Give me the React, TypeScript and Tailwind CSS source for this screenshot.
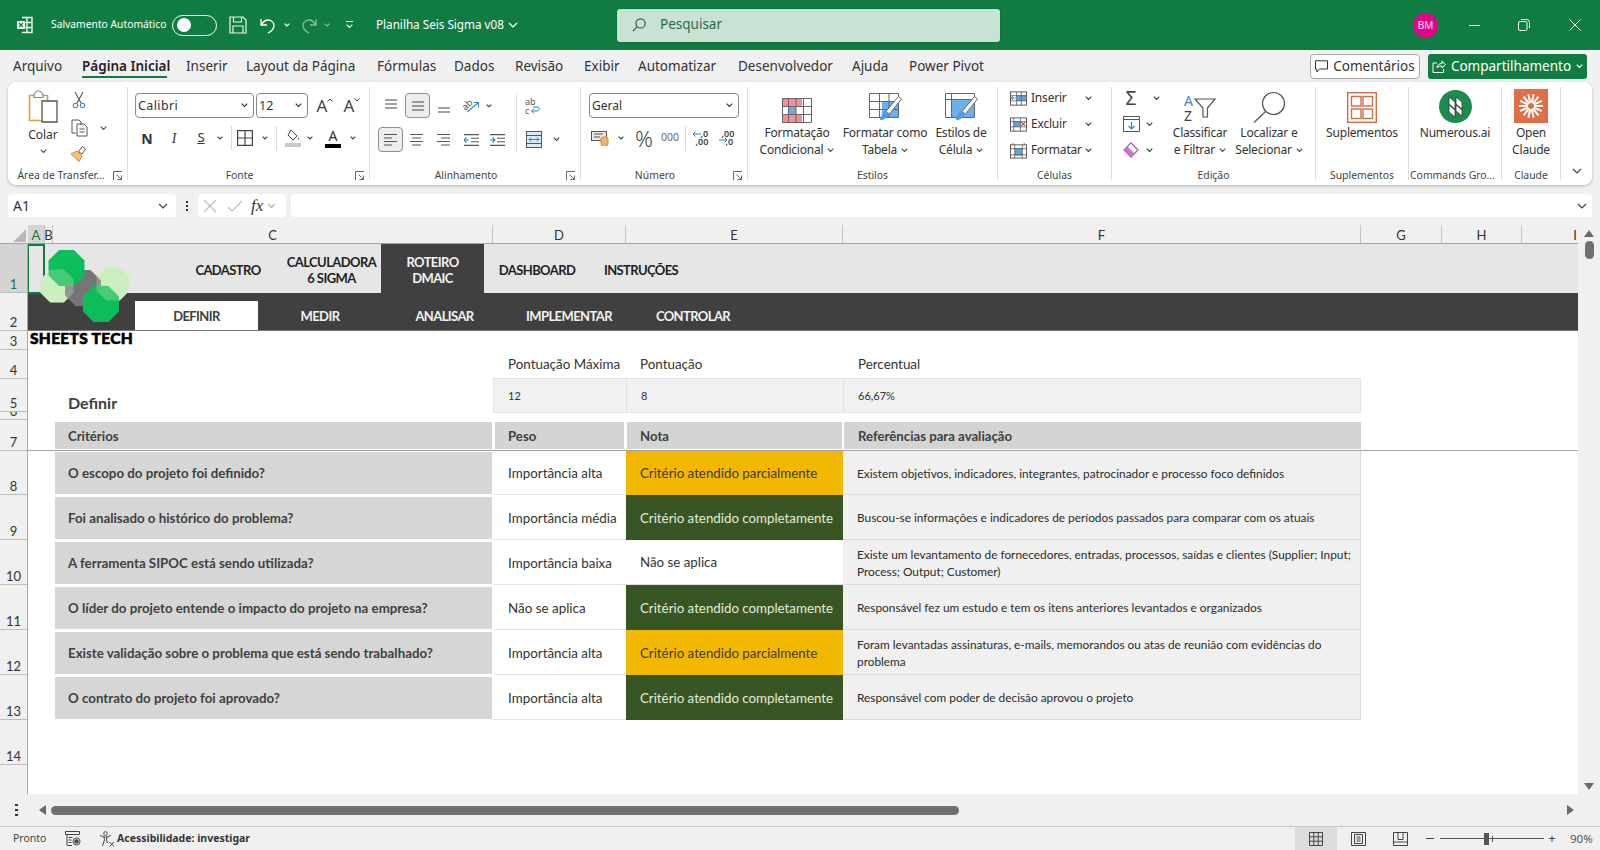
import React from "react";

const UI = "font-['Noto_Sans','Open_Sans',sans-serif]";
const CAL = "font-['Lato','Noto_Sans',sans-serif]";
const GRID = "grid grid-cols-[17px_8px_440px_133px_217px_518px]";

function Chev({ c = "#444", w = 8, sw = 1.2 }: { c?: string; w?: number; sw?: number }) {
  return (
    <svg width={w} height={w * 0.6} viewBox="0 0 10 6" fill="none" stroke={c} strokeWidth={sw * 10 / w}>
      <path d="M1 1l4 4 4-4" />
    </svg>
  );
}
function S({ c = "w-[24px]", children }: { c?: string; children?: React.ReactNode }) {
  return <div className={"flex shrink-0 items-center justify-center " + c}>{children}</div>;
}
function Launcher() {
  return (
    <svg width="10" height="10" viewBox="0 0 10 10" fill="none" stroke="#666" strokeWidth="1" className="shrink-0">
      <path d="M.5 9V.5H9M3.5 3.5l5 5M8.5 4.5v4h-4" />
    </svg>
  );
}
function Sep() {
  return <div className="my-[5px] w-px shrink-0 self-stretch bg-[#dedede]" />;
}
function Group({ w, label, launch, children, lc = "" }: { w: string; label: string; launch?: boolean; children: React.ReactNode; lc?: string }) {
  return (
    <div className={"flex shrink-0 flex-col " + w}>
      <div className="h-[83px]">{children}</div>
      <div className="flex h-[20px] items-center pt-[1px] text-[10.4px] leading-none text-[#444]">
        <div className={"flex-1 whitespace-nowrap text-center " + lc}>{label}</div>
        {launch && <div className="flex w-[18px] shrink-0 justify-center"><Launcher /></div>}
      </div>
    </div>
  );
}
function Big({ w, icon, lines, ch, ml = "" }: { w: string; icon: React.ReactNode; lines: string[]; ch?: boolean; ml?: string }) {
  return (
    <div className={"flex shrink-0 flex-col items-center " + w + " " + ml}>
      <div className="flex h-[43px] items-end justify-center pb-[2px]">{icon}</div>
      <div className="text-center text-[12px] leading-[16.5px] tracking-[-0.2px] whitespace-nowrap text-[#333]">
        {lines.map((l, i) => (
          <div key={l} className="flex items-center justify-center gap-[4px]">
            {l}
            {ch && i === lines.length - 1 && <Chev w={7} c="#555" />}
          </div>
        ))}
      </div>
    </div>
  );
}

function Oct({ cx, cy, h, fill, op = 1 }: { cx: number; cy: number; h: number; fill: string; op?: number }) {
  const t = h * 0.414;
  const p = [[-t, -h], [t, -h], [h, -t], [h, t], [t, h], [-t, h], [-h, t], [-h, -t]].map(([x, y]) => `${cx + x},${cy + y}`).join(" ");
  return <polygon points={p} fill={fill} opacity={op} />;
}
function Logo() {
  return (
    <svg width="100" height="85" viewBox="38 246 100 85" className="block">
      <Oct cx={57} cy={286} h={16.5} fill="#ccefc0" />
      <Oct cx={113} cy={284} h={16.5} fill="#ccefc0" />
      <Oct cx={83} cy={288} h={18} fill="#767676" />
      <Oct cx={66.5} cy={268} h={18} fill="#0cbd5b" />
      <Oct cx={101} cy={304} h={18} fill="#0cbd5b" />
      <Oct cx={57} cy={286} h={16.5} fill="#ccefc0" op={0.3} />
      <Oct cx={113} cy={284} h={16.5} fill="#ccefc0" op={0.3} />
    </svg>
  );
}

/* ---- small office icons ---- */
const I = {
  Excel: () => (
    <svg width="18" height="20" viewBox="0 0 18 20" fill="none" stroke="#fff" strokeWidth="1.3">
      <path d="M6 2.5h10v15H6M11 2.5v15M6 7.5h10M6 12.5h10" />
      <rect x="1" y="6" width="8" height="8" fill="#fff" stroke="none" rx=".7" />
      <path d="M3 8l4 4M7 8l-4 4" stroke="#107c41" strokeWidth="1.2" />
    </svg>
  ),
  Save: () => (
    <svg width="18" height="18" viewBox="0 0 18 18" fill="none" stroke="#fff" strokeWidth="1.2" opacity=".92">
      <path d="M1 1h13l3 3v13H1zM4.5 1v5h8V1M4 17v-7h10v7" />
    </svg>
  ),
  Undo: ({ c = "#fff" }: { c?: string }) => (
    <svg width="18" height="17" viewBox="0 0 18 17" fill="none" stroke={c} strokeWidth="1.3">
      <path d="M2 2v6h6M2 8c2-3 4-5 7-5 3.5 0 6 2.5 6 5.5 0 3-2 5.5-6 7.5" />
    </svg>
  ),
  Redo: ({ c = "#fff" }: { c?: string }) => (
    <svg width="18" height="17" viewBox="0 0 18 17" fill="none" stroke={c} strokeWidth="1.3">
      <path d="M16 2v6h-6M16 8c-2-3-4-5-7-5-3.5 0-6 2.5-6 5.5 0 3 2 5.5 6 7.5" />
    </svg>
  ),
  Search: ({ s = 14, c = "#245f3f", w = 1.2 }: { s?: number; c?: string; w?: number }) => (
    <svg width={s} height={s} viewBox="0 0 14 14" fill="none" stroke={c} strokeWidth={w}>
      <circle cx="8.6" cy="5.4" r="4.6" />
      <path d="M5.2 8.6L.8 13.2" />
    </svg>
  ),
  Paste: () => (
    <svg width="30" height="33" viewBox="0 0 30 33">
      <path d="M1.5 5.5h18v25h-18z" fill="#fff" stroke="#e59b3f" strokeWidth="1.6" />
      <path d="M6 5.5c1-4 3-4.5 4.5-4.5s3.5.5 4.5 4.5v2H6z" fill="#fff" stroke="#888" strokeWidth="1.1" />
      <path d="M14 11h15v21H14z" fill="#fff" stroke="#555" strokeWidth="1.3" />
    </svg>
  ),
  Cut: () => (
    <svg width="14" height="18" viewBox="0 0 14 18" fill="none" strokeWidth="1.1">
      <path d="M3 1l6 11M11 1L5 12" stroke="#555" />
      <circle cx="3.5" cy="14.5" r="2.2" stroke="#3f86c7" />
      <circle cx="10.5" cy="14.5" r="2.2" stroke="#3f86c7" />
    </svg>
  ),
  Copy: () => (
    <svg width="17" height="18" viewBox="0 0 17 18" fill="none" stroke="#555" strokeWidth="1">
      <path d="M5 14H1V1h7l2 2v3" />
      <path d="M6 5h7l3 3v9H6zM8.5 10h5M8.5 13h5" />
    </svg>
  ),
  Brush: () => (
    <svg width="20" height="20" viewBox="0 0 18 18">
      <path d="M1 10l6-3 5 5-3 5.5z" fill="#f4c27a" stroke="#d98a2b" strokeWidth="1" />
      <path d="M8.5 7.5l4-5 3 2.500-3.5 5z" fill="#fff" stroke="#555" strokeWidth="1" />
    </svg>
  ),
  Grow: ({ d }: { d: "up" | "down" }) => (
    <div className="flex items-start text-[#444]">
      <span className="text-[17px] leading-none">A</span>
      <svg width="6" height="4" viewBox="0 0 6 4" fill="none" stroke="#444" strokeWidth="1" className="mt-[1px]">
        <path d={d === "up" ? "M.5 3.5L3 1l2.5 2.5" : "M.5 .5L3 3l2.5-2.5"} />
      </svg>
    </div>
  ),
  Borders: () => (
    <svg width="16" height="16" viewBox="0 0 16 16" fill="none" stroke="#444" strokeWidth="1.2">
      <path d="M.6 .6h14.8v14.8H.6zM8 .6v14.8M.6 8h14.8" />
    </svg>
  ),
  Fill: () => (
    <svg width="17" height="19" viewBox="0 0 17 19">
      <path d="M7 1l6 6-4 4-5-5z" fill="#fff" stroke="#444" strokeWidth="1" />
      <path d="M14 8c1 1.5 1.5 2.5 1 3-1 .5-1.5-1-1-3z" fill="#3a83c7" />
      <path d="M1 14h16v4H1z" fill="#c9c9c9" />
    </svg>
  ),
  ColorA: () => (
    <div className="flex flex-col items-center">
      <span className="text-[14px] leading-[14px] text-[#333]">A</span>
      <div className="mt-[1px] h-[4px] w-[16px] bg-black" />
    </div>
  ),
  Lines: ({ widths, y }: { widths: number[]; y: number }) => (
    <svg width="16" height="14" viewBox="0 0 16 14" fill="none" stroke="#555" strokeWidth="1.1">
      {widths.map((w, i) => (
        <path key={i} d={`M${(16 - w) / 2} ${y + i * 4}h${w}`} />
      ))}
    </svg>
  ),
  Orient: () => (
    <svg width="20" height="18" viewBox="0 0 20 18" fill="none">
      <text x="1" y="10" fontSize="9.5" fill="#555" transform="rotate(-45 7 9)" fontFamily="Noto Sans">ab</text>
      <path d="M5 15L16 6M11.5 5.5h5v5" stroke="#3a88c9" strokeWidth="1.1" />
    </svg>
  ),
  Indent: ({ rev }: { rev?: boolean }) => (
    <svg width="15" height="12" viewBox="0 0 15 12" fill="none" strokeWidth="1.1">
      <path d="M0 .6h15M7 4.3h8M7 7.7h8M0 11.4h15" stroke="#555" />
      <path d={rev ? "M5 6H0M2.4 3.5L0 6l2.4 2.5" : "M0 6h5M2.6 3.5L5 6 2.6 8.5"} stroke="#2f83c4" />
    </svg>
  ),
  Wrap: () => (
    <svg width="16" height="18" viewBox="0 0 16 18" fill="none">
      <text x="0" y="8" fontSize="9" fill="#555" fontFamily="Noto Sans">ab</text>
      <text x="0" y="17" fontSize="9" fill="#555" fontFamily="Noto Sans">c</text>
      <path d="M7 14h5c3 0 3-4 0-4H8M9 11.5L6.5 14 9 16.5" stroke="#2f83c4" strokeWidth="1" />
    </svg>
  ),
  Merge: () => (
    <svg width="16" height="17" viewBox="0 0 16 17" fill="none" strokeWidth="1">
      <rect x=".5" y=".5" width="15" height="16" fill="#d9ebf7" stroke="#555" />
      <path d="M.5 4.5h15M.5 12.5h15" stroke="#555" />
      <path d="M3 8.5h10M5 6.5l-2 2 2 2M11 6.5l2 2-2 2" stroke="#2f83c4" />
    </svg>
  ),
  Currency: () => (
    <svg width="18" height="15" viewBox="0 0 18 15">
      <rect x=".5" y=".5" width="15" height="9" fill="#e9e9e9" stroke="#555" />
      <path d="M3 3h9M3 6h6" stroke="#555" strokeWidth="1.2" />
      <rect x="10" y="6" width="7" height="9" rx="2" fill="#f0b46a" stroke="#d98a2b" />
    </svg>
  ),
  Dec: ({ rev }: { rev?: boolean }) =>
    rev ? (
      <div className="relative h-[17px] w-[17px] text-[9px] font-semibold leading-[8.5px] text-[#444]">
        <div className="pl-[3px]">,00</div>
        <div className="pl-[7px]">,0</div>
        <svg width="9" height="6" viewBox="0 0 9 6" fill="none" stroke="#2f83c4" className="absolute left-0 top-[7px]"><path d="M0 3h8M5.5.5L8 3 5.5 5.5" /></svg>
      </div>
    ) : (
      <div className="relative h-[17px] w-[17px] text-[9px] font-semibold leading-[8.5px] text-[#444]">
        <div className="pl-[9px]">,0</div>
        <div className="pl-[4px]">,00</div>
        <svg width="9" height="6" viewBox="0 0 9 6" fill="none" stroke="#2f83c4" className="absolute left-0 top-[1px]"><path d="M9 3H1M3.5.5L1 3l2.5 2.5" /></svg>
      </div>
    ),
  Cond: () => (
    <svg width="30" height="25" viewBox="0 0 30 25">
      <rect width="30" height="25" fill="#fff" />
      <rect x="0" y="0" width="20" height="8" fill="#f58d98" />
      <rect x="0" y="17" width="20" height="8" fill="#f58d98" />
      <rect x="6" y="8" width="8" height="9" fill="#6ea8e6" />
      <path d="M.5 .5h29v24H.5zM.5 8.5h29M.5 16.5h29M6.5 .5v24M14 .5v24M21.5 .5v24" fill="none" stroke="#666" strokeWidth="1" />
    </svg>
  ),
  Table: () => (
    <svg width="33" height="30" viewBox="0 0 33 30">
      <rect x="13" y="8" width="17" height="16" fill="#6ab0ec" />
      <path d="M.5 .5h29v24H.5zM.5 8.5h29M.5 16.5h29M10.5 .5v24M20 .5v24" fill="none" stroke="#666" strokeWidth="1" />
      <path d="M32.5 6L20.5 21l-3.500-2.500L29.500 3.500z" fill="#fff" stroke="#666" strokeWidth="1" />
      <path d="M17 18c-3 0-4 4-6 8-1 2 4 1 6-1 3-2 3-4 3-5z" fill="#4c9ee0" />
    </svg>
  ),
  Style: () => (
    <svg width="33" height="30" viewBox="0 0 33 30">
      <rect x="6" y="6" width="24" height="18" fill="#6ab0ec" />
      <path d="M.5 .5h29v24H.5zM.5 6.5h29M6.5 .5v24" fill="none" stroke="#666" strokeWidth="1" />
      <path d="M32.5 6L20.5 21l-3.500-2.500L29.500 3.500z" fill="#fff" stroke="#666" strokeWidth="1" />
      <path d="M17 18c-3 0-4 4-6 8-1 2 4 1 6-1 3-2 3-4 3-5z" fill="#4c9ee0" />
    </svg>
  ),
  Ins: () => (
    <svg width="18" height="15" viewBox="0 0 18 15">
      <rect x=".5" y=".5" width="17" height="14" fill="#fff" stroke="#555" />
      <rect x="7" y="4" width="10" height="6" fill="#5aa5e4" />
      <path d="M.5 4.5h17M.5 10h17M7 .5v14M12 .5v14" stroke="#555" strokeWidth=".8" fill="none" />
      <path d="M6 7H1M3 5L1 7l2 2" stroke="#2f83c4" fill="none" />
    </svg>
  ),
  Del: () => (
    <svg width="18" height="15" viewBox="0 0 18 15">
      <rect x=".5" y=".5" width="17" height="14" fill="#fff" stroke="#555" />
      <rect x="4" y="4" width="7" height="6" fill="#5aa5e4" />
      <path d="M.5 4.5h17M.5 10h17M4 .5v14M11 .5v14" stroke="#555" strokeWidth=".8" fill="none" />
      <path d="M12 5l4 4M16 5l-4 4" stroke="#d8354a" strokeWidth="1.2" fill="none" />
    </svg>
  ),
  Fmt: () => (
    <svg width="18" height="17" viewBox="0 0 18 17">
      <rect x=".5" y="2.5" width="17" height="14" fill="#fff" stroke="#555" />
      <rect x="5" y="6" width="8" height="8" fill="#5aa5e4" />
      <path d="M.5 6.5h17M.5 13h17M5 2.5v14M13 2.5v14M3 .5v2M15 .5v2" stroke="#555" strokeWidth=".8" fill="none" />
    </svg>
  ),
  FillD: () => (
    <svg width="17" height="16" viewBox="0 0 17 16" fill="none">
      <path d="M.5 .5h16v15H.5zM.5 3.5h16" stroke="#555" />
      <path d="M8.5 6v7M5.5 10l3 3 3-3" stroke="#2f83c4" strokeWidth="1.2" />
    </svg>
  ),
  Erase: () => (
    <svg width="16" height="16" viewBox="0 0 16 16">
      <path d="M8 .8L15 8l-7 7.2L1 8z" fill="#fff" stroke="#a84db5" strokeWidth="1.2" />
      <path d="M1 8l3.5-3.5 7 7L8 15.2z" fill="#c774cf" />
    </svg>
  ),
  Sort: () => (
    <svg width="32" height="30" viewBox="0 0 32 30" fill="none">
      <text x="0" y="13" fontSize="14" fill="#3f86c7" fontFamily="Noto Sans">A</text>
      <text x="0" y="28" fontSize="14" fill="#444" fontFamily="Noto Sans">Z</text>
      <path d="M11 6h20l-7.5 9v9h-4.5v-9z" stroke="#555" strokeWidth="1.2" />
    </svg>
  ),
  Find: () => (
    <svg width="33" height="32" viewBox="0 0 33 32" fill="none" stroke="#555" strokeWidth="1.2">
      <circle cx="20.5" cy="12.5" r="11" fill="#fff" />
      <path d="M12.5 20.5L1 31.5" />
    </svg>
  ),
  Addins: () => (
    <svg width="30" height="31" viewBox="0 0 30 31" fill="#fff" stroke="#cb6f48" strokeWidth="1.4">
      <rect x=".7" y=".7" width="28.6" height="29.6" />
      <rect x="4.5" y="4.5" width="9.5" height="9.5" />
      <rect x="16" y="4.5" width="9.5" height="9.5" />
      <rect x="4.5" y="17" width="9.5" height="9.5" />
      <rect x="16" y="17" width="9.5" height="9.5" />
    </svg>
  ),
  Numerous: () => (
    <svg width="33" height="33" viewBox="0 0 33 33">
      <circle cx="16.5" cy="16.5" r="16.5" fill="#1f8a4e" />
      <path d="M10 7l6 5v7l-6-5zM17 7l6 5v7l-6-5zM10 15l6 5v7l-6-5zM17 15l6 5v6l-6-5z" fill="#fff" stroke="#333" strokeWidth=".8" />
    </svg>
  ),
  Claude: () => (
    <svg width="34" height="34" viewBox="0 0 34 34">
      <rect width="34" height="34" fill="#df6f47" />
      {Array.from({ length: 14 }).map((_, i) => {
        const a = (i * Math.PI * 2) / 14;
        return <line key={i} x1={17 + Math.cos(a) * 3} y1={17 + Math.sin(a) * 3} x2={17 + Math.cos(a) * 12} y2={17 + Math.sin(a) * 12} stroke="#fff" strokeWidth="2" />;
      })}
    </svg>
  ),
  Comment: () => (
    <svg width="13" height="13" viewBox="0 0 13 13" fill="none" stroke="#333" strokeWidth="1">
      <path d="M.5 .8h12v8.2H4.5L1.8 12V9H.5z" />
    </svg>
  ),
  Share: () => (
    <svg width="14" height="13" viewBox="0 0 14 13" fill="none" stroke="#fff" strokeWidth="1">
      <path d="M5 3H1v9.5h10.5V9M5 8c0-3 2-4.5 5-4.5V1l3.5 3.8L10 8V6c-2 0-4 0-5 2z" />
    </svg>
  ),
  Restore: () => (
    <svg width="12" height="12" viewBox="0 0 12 12" fill="none" stroke="#fff" strokeWidth="1">
      <rect x=".5" y="2.5" width="8.5" height="9" rx="1.5" />
      <path d="M3 .5h5.5A3 3 0 0 1 11.5 3.5V9" />
    </svg>
  ),
  Access: () => (
    <svg width="16" height="16" viewBox="0 0 16 16" fill="none" stroke="#444" strokeWidth="1">
      <circle cx="6.5" cy="2.5" r="1.8" />
      <path d="M1 4.5l4 1.5h3l4-1.5M5 6l.5 3L3.5 15M8 6L7.5 9l1 3M10.5 11l4.5 4.5M15 11l-4.5 4.5" />
    </svg>
  ),
  Macro: () => (
    <svg width="16" height="15" viewBox="0 0 16 15" fill="none" stroke="#444" strokeWidth="1">
      <path d="M.5 .5h14v3H.5zM2 3.5v11h5M3.5 6.5h4M3.5 9h3M3.5 11.5h3" />
      <circle cx="11.5" cy="10.5" r="3.5" />
      <circle cx="11.5" cy="10.5" r="1.8" fill="#444" />
    </svg>
  ),
  Normal: () => (
    <svg width="14" height="14" viewBox="0 0 14 14" fill="none" stroke="#444" strokeWidth="1">
      <path d="M.5 .5h13v13H.5zM.5 4.8h13M.5 9.2h13M4.8 .5v13M9.2 .5v13" />
    </svg>
  ),
  PageL: () => (
    <svg width="15" height="14" viewBox="0 0 15 14" fill="none" stroke="#444" strokeWidth="1">
      <path d="M.5 .5h14v13H.5zM3.5 2.5h8v9h-8zM5.5 5h4M5.5 7h4M5.5 9h4" />
    </svg>
  ),
  Break: () => (
    <svg width="15" height="14" viewBox="0 0 15 14" fill="none" stroke="#444" strokeWidth="1">
      <path d="M.5 .5h14v13H.5zM5 .5v7h5v-7M.5 10h14" />
    </svg>
  ),
};

const tabs: [string, string][] = [
  ["Arquivo", "w-[69px]"],
  ["Página Inicial", "w-[104px]"],
  ["Inserir", "w-[60px]"],
  ["Layout da Página", "w-[131px]"],
  ["Fórmulas", "w-[77px]"],
  ["Dados", "w-[61px]"],
  ["Revisão", "w-[69px]"],
  ["Exibir", "w-[54px]"],
  ["Automatizar", "w-[100px]"],
  ["Desenvolvedor", "w-[114px]"],
  ["Ajuda", "w-[57px]"],
  ["Power Pivot", "w-[80px]"],
];

function TitleBar() {
  return (
    <div className="flex h-[50px] shrink-0 items-center bg-[#107c41] text-white">
      <div className="ml-[16px] flex w-[18px] justify-center"><I.Excel /></div>
      <div className="ml-[17px] w-[121px] whitespace-nowrap text-[10.3px]">Salvamento Automático</div>
      <div className="flex h-[21px] w-[45px] items-center rounded-full border border-white pl-[4px]">
        <div className="h-[14px] w-[14px] rounded-full bg-white" />
      </div>
      <div className="ml-[12px] flex w-[18px]"><I.Save /></div>
      <div className="ml-[12px] flex w-[18px]"><I.Undo /></div>
      <div className="ml-[5px] flex w-[10px] justify-center"><Chev c="#fff" w={6} /></div>
      <div className="ml-[8px] flex w-[18px] opacity-50"><I.Redo /></div>
      <div className="ml-[4px] flex w-[10px] justify-center opacity-50"><Chev c="#fff" w={6} /></div>
      <div className="ml-[12px] flex w-[10px] flex-col items-center gap-[2px]">
        <div className="h-px w-[7px] bg-white" />
        <Chev c="#fff" w={7} />
      </div>
      <div className="ml-[22px] w-[129px] whitespace-nowrap text-[11.7px]">Planilha Seis Sigma v08</div>
      <div className="ml-[3px] flex w-[10px]"><Chev c="#fff" w={10} /></div>
      <div className="ml-[99px] flex h-[33px] w-[383px] items-center rounded-[3px] bg-[#c8e2d3] pb-[1px] text-[13.5px] text-[#2b6b49] shadow-[0_0_2px_rgba(0,0,0,.3)]">
        <div className="ml-[15px] flex w-[14px]"><I.Search /></div>
        <div className="ml-[14px]">Pesquisar</div>
      </div>
      <div className="ml-[413px] flex h-[25px] w-[25px] items-center justify-center rounded-full bg-[#e3008c] text-[10px] text-white/90">BM</div>
      <div className="ml-[31px] h-px w-[11px] bg-white" />
      <div className="ml-[38px] flex w-[12px]"><I.Restore /></div>
      <div className="ml-[39px] flex w-[12px]">
        <svg width="12" height="12" viewBox="0 0 12 12" stroke="#fff" strokeWidth="1"><path d="M.5 .5l11 11M11.5 .5l-11 11" /></svg>
      </div>
    </div>
  );
}

function TabRow() {
  return (
    <div className="flex h-[32px] shrink-0 items-center pl-[13px] text-[13.5px] text-[#333]">
      {tabs.map(([t, w]) =>
        t === "Página Inicial" ? (
          <div key={t} className={"relative shrink-0 " + w}>
            <div className="inline-block whitespace-nowrap font-semibold text-[#222]">{t}</div>
            <div className="absolute left-0 top-[20px] h-[2px] w-[85px] bg-[#107c41]" />
          </div>
        ) : (
          <div key={t} className={"shrink-0 whitespace-nowrap " + w}>{t}</div>
        )
      )}
      <div className="ml-[321px] flex h-[25px] w-[110px] items-center justify-center gap-[5px] rounded-[4px] border border-[#a8a8a8] bg-white text-[13.5px]">
        <I.Comment />
        Comentários
      </div>
      <div className="ml-[8px] flex h-[25px] w-[159px] items-center justify-center gap-[5px] rounded-[3px] bg-[#107c41] text-[13.5px] text-white">
        <I.Share />
        Compartilhamento
        <Chev c="#fff" w={7} />
      </div>
    </div>
  );
}

function Select({ w, label, lc = "" }: { w: string; label: string; lc?: string }) {
  return (
    <div className={"flex h-[25px] shrink-0 items-center justify-between rounded-[4px] border border-[#8a8a8a] bg-white pl-[2px] pr-[5px] text-[12px] text-[#333] " + w}>
      <span className={"pt-[1px] " + lc}>{label}</span>
      <Chev w={7} c="#333" />
    </div>
  );
}

function Ribbon() {
  return (
    <div className="mx-[8px] flex h-[103px] shrink-0 rounded-[8px] bg-white shadow-[0_1px_3px_rgba(0,0,0,.25)]">
      {/* clipboard */}
      <Group w="w-[119px]" label="Área de Transfer..." launch lc="pl-[5px]">
        <div className="flex pt-[8px]">
          <div className="ml-[19px] flex w-[32px] flex-col items-center">
            <I.Paste />
            <div className="mt-[3px] text-[12px] leading-[17px] text-[#333]">Colar</div>
            <div className="mt-[6px]"><Chev w={7} c="#555" /></div>
          </div>
          <div className="ml-[11px] flex w-[44px] flex-col">
            <S c="h-[20px] w-[18px]"><I.Cut /></S>
            <div className="mt-[6px] flex h-[24px] items-center">
              <S c="w-[18px]"><I.Copy /></S>
              <S c="ml-[9px] w-[12px]"><Chev w={7} c="#555" /></S>
            </div>
            <S c="mt-[2px] h-[22px] w-[18px]"><I.Brush /></S>
          </div>
        </div>
      </Group>
      <Sep />
      {/* font */}
      <Group w="w-[241px]" label="Fonte" launch>
        <div className="flex items-center pl-[7px] pt-[11px]">
          <Select w="w-[119px]" label="Calibri" lc="text-[12.5px] tracking-[.4px]" />
          <Select w="ml-[2px] w-[52px]" label="12" lc="text-[12.5px]" />
          <S c="ml-[7px] w-[20px]"><I.Grow d="up" /></S>
          <S c="ml-[7px] w-[20px]"><I.Grow d="down" /></S>
        </div>
        <div className="mt-[8px] flex h-[24px] items-center pl-[7px] text-[#333]">
          <S c="w-[24px] text-[14px] font-bold">N</S>
          <S c="ml-[3px] w-[24px] font-['Liberation_Serif',serif] text-[14px] italic">I</S>
          <S c="ml-[3px] w-[24px] text-[13px] underline">S</S>
          <S c="w-[14px]"><Chev w={6} /></S>
          <div className="ml-[4px] h-[24px] w-px bg-[#dcdcdc]" />
          <S c="ml-[1px] w-[24px]"><I.Borders /></S>
          <S c="w-[16px]"><Chev w={6} /></S>
          <div className="ml-[3px] h-[24px] w-px bg-[#dcdcdc]" />
          <S c="w-[30px]"><I.Fill /></S>
          <S c="w-[6px]"><Chev w={6} /></S>
          <S c="ml-[8px] w-[24px]"><I.ColorA /></S>
          <S c="w-[16px]"><Chev w={6} /></S>
        </div>
      </Group>
      <Sep />
      {/* alignment */}
      <Group w="w-[210px]" label="Alinhamento" launch>
        <div className="flex h-[70px] pt-[11px]">
          <div className="flex w-[146px] flex-col">
            <div className="flex h-[25px] items-center">
              <S c="ml-[10px] w-[22px]"><I.Lines widths={[12, 12, 12]} y={1} /></S>
              <S c="ml-[3px] h-[25px] w-[25px] rounded-[4px] border border-[#8f8f8f] bg-[#ededed]"><I.Lines widths={[12, 12, 12]} y={3} /></S>
              <S c="ml-[2px] w-[24px]"><I.Lines widths={[12, 12]} y={9} /></S>
              <S c="ml-[4px] w-[24px]"><I.Orient /></S>
              <S c="w-[10px]"><Chev w={6} /></S>
            </div>
            <div className="mt-[9px] flex h-[25px] items-center">
              <S c="ml-[8px] h-[25px] w-[25px] rounded-[4px] border border-[#8f8f8f] bg-[#ededed]">
                <svg width="15" height="13" viewBox="0 0 15 13" stroke="#555" strokeWidth="1.1"><path d="M1 1.5h13M1 5h8M1 8.5h13M1 12h8" /></svg>
              </S>
              <S c="ml-[1px] w-[24px]">
                <svg width="15" height="13" viewBox="0 0 15 13" stroke="#555" strokeWidth="1.1"><path d="M1 1.5h13M3 5h9M1 8.5h13M3 12h9" /></svg>
              </S>
              <S c="ml-[3px] w-[24px]">
                <svg width="15" height="13" viewBox="0 0 15 13" stroke="#555" strokeWidth="1.1"><path d="M1 1.5h13M5 5h9M1 8.5h13M5 12h9" /></svg>
              </S>
              <S c="ml-[4px] w-[24px]"><I.Indent rev /></S>
              <S c="ml-[2px] w-[24px]"><I.Indent /></S>
            </div>
          </div>
          <div className="h-[59px] w-px bg-[#dedede]" />
          <div className="flex flex-col">
            <S c="ml-[6px] h-[25px] w-[20px]"><I.Wrap /></S>
            <div className="mt-[9px] flex h-[25px] items-center">
              <S c="ml-[7px] w-[20px]"><I.Merge /></S>
              <S c="ml-[4px] w-[16px]"><Chev w={7} /></S>
            </div>
          </div>
        </div>
      </Group>
      <Sep />
      {/* number */}
      <Group w="w-[166px]" label="Número" launch>
        <div className="pl-[8px] pt-[11px]"><Select w="w-[150px]" label="Geral" /></div>
        <div className="mt-[7px] flex h-[26px] items-center pl-[7px] text-[#444]">
          <S c="w-[24px]"><I.Currency /></S>
          <S c="w-[18px]"><Chev w={6} /></S>
          <S c="w-[28px] text-[22px] leading-none font-light">%</S>
          <S c="w-[24px] text-[10.5px] text-[#666]">000</S>
          <div className="ml-[3px] h-[25px] w-px bg-[#dcdcdc]" />
          <S c="w-[28px]"><I.Dec /></S>
          <S c="w-[26px]"><I.Dec rev /></S>
        </div>
      </Group>
      <Sep />
      {/* styles */}
      <Group w="w-[249px]" label="Estilos">
        <div className="flex">
          <Big w="w-[90px]" ml="ml-[4px]" icon={<I.Cond />} lines={["Formatação", "Condicional"]} ch />
          <Big w="w-[72px]" ml="ml-[7px]" icon={<I.Table />} lines={["Formatar como", "Tabela"]} ch />
          <Big w="w-[72px]" ml="ml-[4px]" icon={<I.Style />} lines={["Estilos de", "Célula"]} ch />
        </div>
      </Group>
      <Sep />
      {/* cells */}
      <Group w="w-[113px]" label="Células">
        <div className="pl-[12px] pt-[3px] text-[12px] tracking-[-0.2px] text-[#333]">
          {([["Inserir", <I.Ins key="a" />], ["Excluir", <I.Del key="b" />], ["Formatar", <I.Fmt key="c" />]] as [string, React.ReactNode][]).map(([t, ic]) => (
            <div key={t} className="flex h-[26px] items-center">
              <S c="w-[17px]">{ic}</S>
              <div className="ml-[4px] w-[52px] whitespace-nowrap">{t}</div>
              <S c="w-[10px]"><Chev w={7} /></S>
            </div>
          ))}
        </div>
      </Group>
      <Sep />
      {/* edit */}
      <Group w="w-[203px]" label="Edição">
        <div className="flex">
          <div className="ml-[9px] flex w-[44px] flex-col pt-[3px]">
            <div className="flex h-[26px] items-center">
              <S c="w-[20px] text-[19px] leading-none text-[#444]">Σ</S>
              <S c="ml-[10px] w-[10px]"><Chev w={7} /></S>
            </div>
            <div className="flex h-[26px] items-center">
              <S c="w-[20px]"><I.FillD /></S>
              <S c="ml-[3px] w-[10px]"><Chev w={7} /></S>
            </div>
            <div className="flex h-[26px] items-center">
              <S c="w-[20px]"><I.Erase /></S>
              <S c="ml-[3px] w-[10px]"><Chev w={7} /></S>
            </div>
          </div>
          <Big w="w-[70px]" icon={<I.Sort />} lines={["Classificar", "e Filtrar"]} ch />
          <Big w="w-[68px]" icon={<I.Find />} lines={["Localizar e", "Selecionar"]} ch />
        </div>
      </Group>
      <Sep />
      <Group w="w-[92px]" label="Suplementos">
        <Big w="w-[92px]" icon={<I.Addins />} lines={["Suplementos"]} />
      </Group>
      <Sep />
      <Group w="w-[92px]" label="Commands Gro..." lc="pr-[5px]">
        <Big w="w-[92px]" icon={<I.Numerous />} lines={["Numerous.ai"]} />
      </Group>
      <Sep />
      <Group w="w-[58px]" label="Claude">
        <Big w="w-[58px]" icon={<I.Claude />} lines={["Open", "Claude"]} />
      </Group>
      <Sep />
      <div className="flex flex-1 items-end justify-center pb-[11px]"><Chev w={10} c="#444" /></div>
    </div>
  );
}

function FormulaBar() {
  return (
    <div className="mt-[9px] flex h-[23px] shrink-0 items-stretch px-[8px]">
      <div className="flex w-[168px] items-center justify-between rounded-[4px] bg-white pl-[5px] pr-[8px] text-[14px] text-[#333]">
        A1
        <Chev w={10} c="#444" />
      </div>
      <div className="flex w-[22px] flex-col items-center justify-center gap-[2px]">
        <div className="h-[2px] w-[2px] bg-[#333]" />
        <div className="h-[2px] w-[2px] bg-[#333]" />
        <div className="h-[2px] w-[2px] bg-[#333]" />
      </div>
      <div className="flex w-[88px] items-center rounded-[4px] bg-white pl-[5px]">
        <svg width="14" height="14" viewBox="0 0 14 14" stroke="#bbb" strokeWidth="1.1"><path d="M1 1l12 12M13 1L1 13" /></svg>
        <svg width="16" height="12" viewBox="0 0 16 12" fill="none" stroke="#bbb" strokeWidth="1.1" className="ml-[10px]"><path d="M1 7l4 4L15 1" /></svg>
        <span className="ml-[8px] font-['Liberation_Serif',serif] text-[17px] italic text-[#333]">fx</span>
        <div className="ml-[4px]"><Chev w={9} c="#aaa" /></div>
      </div>
      <div className="ml-[5px] flex flex-1 items-center justify-end rounded-[4px] bg-white pr-[5px]"><Chev w={10} c="#444" /></div>
    </div>
  );
}

function ColHeaders() {
  const cols: [string, string][] = [
    ["A", "w-[17px] bg-[#d4d4d4] text-[#217346]"],
    ["B", "w-[8px]"],
    ["C", "w-[440px]"],
    ["D", "w-[133px]"],
    ["E", "w-[217px]"],
    ["F", "w-[518px]"],
    ["G", "w-[81px]"],
    ["H", "w-[80px]"],
  ];
  return (
    <div className={"flex h-[19px] shrink-0 overflow-hidden border-b border-[#a3a3a3] text-[13px] text-[#333] " + CAL}>
      <div className="flex w-[28px] shrink-0 items-end justify-end pb-[1px] pr-[2px]">
        <svg width="13" height="13" viewBox="0 0 13 13"><path d="M13 0v13H0z" fill="#b8b8b8" /></svg>
      </div>
      {cols.map(([n, c]) => (
        <div key={n} className={"flex shrink-0 items-center justify-center border-r border-[#c4c4c4] pt-[3px] " + c}>{n}</div>
      ))}
      <div className="flex flex-1 items-center justify-end pr-[1px] pt-[3px]">I</div>
    </div>
  );
}

const rowHeads: [string, string][] = [
  ["1", "h-[49px] bg-[#d4d4d4] text-[#217346]"],
  ["2", "h-[38px]"],
  ["3", "h-[19px]"],
  ["4", "h-[29px]"],
  ["5", "h-[33px]"],
  ["6", "h-[8px]"],
  ["7", "h-[31px]"],
  ["8", "h-[44px]"],
  ["9", "h-[45px]"],
  ["10", "h-[45px]"],
  ["11", "h-[45px]"],
  ["12", "h-[45px]"],
  ["13", "h-[45px]"],
  ["14", "h-[45px]"],
];

type RowD = { q: string; p: string; n: "p" | "c" | "x"; r: string };
const rows: RowD[] = [
  { q: "O escopo do projeto foi definido?", p: "Importância alta", n: "p", r: "Existem objetivos, indicadores, integrantes, patrocinador e processo foco definidos" },
  { q: "Foi analisado o histórico do problema?", p: "Importância média", n: "c", r: "Buscou-se informações e indicadores de períodos passados para comparar com os atuais" },
  { q: "A ferramenta SIPOC está sendo utilizada?", p: "Importância baixa", n: "x", r: "Existe um levantamento de fornecedores, entradas, processos, saídas e clientes (Supplier; Input; Process; Output; Customer)" },
  { q: "O líder do projeto entende o impacto do projeto na empresa?", p: "Não se aplica", n: "c", r: "Responsável fez um estudo e tem os itens anteriores levantados e organizados" },
  { q: "Existe validação sobre o problema que está sendo trabalhado?", p: "Importância alta", n: "p", r: "Foram levantadas assinaturas, e-mails, memorandos ou atas de reunião com evidências do problema" },
  { q: "O contrato do projeto foi aprovado?", p: "Importância alta", n: "c", r: "Responsável com poder de decisão aprovou o projeto" },
];
const nota = {
  p: { t: "Critério atendido parcialmente", c: "bg-[#f2b800] text-[#3b3b2b]" },
  c: { t: "Critério atendido completamente", c: "bg-[#375623] text-[#e6ecd6]" },
  x: { t: "Não se aplica", c: "bg-white text-[#333] border-b border-[#e2e2e2]" },
};

function Sheet() {
  return (
    <div className={"flex min-h-0 flex-1 " + CAL}>
      <div className="flex w-[28px] shrink-0 flex-col border-r border-[#a8a8a8] text-[13px] text-[#333]">
        {rowHeads.map(([n, c]) => (
          <div key={n} className={"flex shrink-0 items-end justify-center overflow-hidden border-b border-[#bdbdbd] leading-[15px] " + c}>{n}</div>
        ))}
      </div>
      <div className="relative min-w-0 flex-1 overflow-hidden bg-white">
        {/* nav 1 */}
        <div className="flex h-[49px] bg-[#e6e6e6] text-[13px] font-bold leading-[16.5px] tracking-[-0.6px] text-[#1f1f1f]">
          <div className="w-[148px] shrink-0" />
          <div className="flex w-[104px] shrink-0 items-center justify-center pt-[3px]">CADASTRO</div>
          <div className="ml-[2px] flex w-[99px] shrink-0 items-center justify-center pt-[3px] text-center">CALCULADORA<br />6 SIGMA</div>
          <div className="flex w-[103px] shrink-0 items-center justify-center bg-[#404040] pt-[3px] text-center text-[#f2f2f2]">ROTEIRO<br />DMAIC</div>
          <div className="flex w-[106px] shrink-0 items-center justify-center pt-[3px]">DASHBOARD</div>
          <div className="flex w-[102px] shrink-0 items-center justify-center pt-[3px]">INSTRUÇÕES</div>
        </div>
        {/* nav 2 */}
        <div className="flex h-[38px] items-end border-b border-[#777] bg-[#404040] pl-[107px] text-[13px] font-bold tracking-[-0.6px] text-[#f2f2f2]">
          <div className="flex h-[29px] w-[123px] shrink-0 items-center justify-center bg-white pt-[3px] text-[#404040]">DEFINIR</div>
          <div className="flex h-[29px] w-[124px] shrink-0 items-center justify-center pt-[3px]">MEDIR</div>
          <div className="flex h-[29px] w-[125px] shrink-0 items-center justify-center pt-[3px]">ANALISAR</div>
          <div className="flex h-[29px] w-[124px] shrink-0 items-center justify-center pt-[3px]">IMPLEMENTAR</div>
          <div className="flex h-[29px] w-[124px] shrink-0 items-center justify-center pt-[3px]">CONTROLAR</div>
        </div>
        <div className="h-[19px]" />
        {/* row 4 */}
        <div className={GRID + " h-[29px] items-center text-[13.4px] text-[#333]"}>
          <div className="col-start-4 pl-[15px] whitespace-nowrap">Pontuação Máxima</div>
          <div className="pl-[14px]">Pontuação</div>
          <div className="pl-[15px]">Percentual</div>
        </div>
        {/* row 5 */}
        <div className={GRID + " h-[33px]"}>
          <div className="col-start-3 flex items-end pl-[15px] text-[16px] font-bold leading-[18px] text-[#404040]">Definir</div>
          <div className="-my-px flex items-center border border-r-0 border-[#e2e2e2] bg-[#f1f1f1] pl-[14px] pt-[2px] text-[11px] text-[#333]">12</div>
          <div className="-my-px flex items-center border border-r-0 border-[#e2e2e2] bg-[#f1f1f1] pl-[14px] pt-[2px] text-[11px] text-[#333]">8</div>
          <div className="-my-px flex items-center border border-[#e2e2e2] bg-[#f1f1f1] pl-[14px] pt-[2px] text-[11px] text-[#333]">66,67%</div>
        </div>
        <div className="h-[8px]" />
        {/* row 7 */}
        <div className={GRID + " h-[31px] border-b border-[#a3a3a3] text-[13.2px] font-bold text-[#404040]"}>
          <div className="col-start-3 mb-px ml-[2px] mr-px mt-[2px] flex items-center bg-[#d4d4d4] pl-[13px] pt-[2px]">Critérios</div>
          <div className="mb-px ml-[2px] mr-[2px] mt-[2px] flex items-center bg-[#d4d4d4] pl-[13px] pt-[2px]">Peso</div>
          <div className="mb-px ml-px mr-px mt-[2px] flex items-center bg-[#d4d4d4] pl-[13px] pt-[2px]">Nota</div>
          <div className="mb-px ml-px mt-[2px] flex items-center bg-[#d4d4d4] pl-[14px] pt-[2px]">Referências para avaliação</div>
        </div>
        {/* data */}
        {rows.map((r, i) => (
          <div key={r.q} className={GRID + (i === 0 ? " h-[44px]" : " h-[45px]")}>
            <div className={"col-start-3 mb-px ml-[2px] mr-px flex items-center bg-[#d6d6d6] pl-[13px] pt-[2px] text-[13.3px] font-bold text-[#404040] " + (i === 0 ? "mt-px" : "mt-[2px]")}>{r.q}</div>
            <div className="flex items-center border-b border-[#e2e2e2] pl-[15px] pt-[2px] text-[13.4px] text-[#333]">{r.p}</div>
            <div className={"flex items-center pl-[14px] pt-[2px] text-[13.3px] " + nota[r.n].c}>{nota[r.n].t}</div>
            <div className="flex items-center border-b border-r border-[#dddddd] bg-[#f0f0f0] pl-[14px] pr-[4px] pt-[2px] text-[11.85px] leading-[17.5px] text-[#2b2b2b]">
              <div>{r.r}</div>
            </div>
          </div>
        ))}
        {/* logo + selection overlays */}
        <div className="absolute left-[-1px] top-0 h-[50px] w-[18px] border-2 border-[#107c41]" />
        <div className="absolute left-[10px] top-[2px]"><Logo /></div>
        <div className="absolute left-[2px] top-[84px] text-[15.5px] font-black leading-[20px] tracking-[.3px] whitespace-nowrap text-black [-webkit-text-stroke:0.6px_black]">SHEETS TECH</div>
      </div>
    </div>
  );
}

function VScroll() {
  return (
    <div className="flex w-[22px] shrink-0 flex-col items-center">
      <div className="mt-[5px] h-0 w-0 border-x-[5px] border-b-[7px] border-x-transparent border-b-[#6a6a6a]" />
      <div className="mt-[4px] h-[18px] w-[9px] rounded-full bg-[#6f6f6f]" />
      <div className="flex-1" />
      <div className="mb-[4px] h-0 w-0 border-x-[5px] border-t-[7px] border-x-transparent border-t-[#6a6a6a]" />
    </div>
  );
}

function HScroll() {
  return (
    <div className="flex h-[33px] shrink-0 items-center border-b border-[#c8c8c8]">
      <div className="ml-[15px] flex flex-col gap-[2.5px]">
        <div className="h-[2.5px] w-[2.5px] bg-[#333]" />
        <div className="h-[2.5px] w-[2.5px] bg-[#333]" />
        <div className="h-[2.5px] w-[2.5px] bg-[#333]" />
      </div>
      <div className="ml-[21px] h-0 w-0 border-y-[5px] border-r-[7px] border-y-transparent border-r-[#6a6a6a]" />
      <div className="ml-[5px] h-[9px] w-[908px] rounded-full bg-[#707070]" />
      <div className="flex-1" />
      <div className="mr-[26px] h-0 w-0 border-y-[5px] border-l-[7px] border-y-transparent border-l-[#6a6a6a]" />
    </div>
  );
}

function StatusBar() {
  return (
    <div className="flex h-[23px] shrink-0 items-center text-[10.5px] text-[#444]">
      <div className="ml-[13px] w-[52px]">Pronto</div>
      <div className="flex w-[16px]"><I.Macro /></div>
      <div className="ml-[18px] flex w-[16px]"><I.Access /></div>
      <div className="ml-[2px] whitespace-nowrap font-bold text-[#333]">Acessibilidade: investigar</div>
      <div className="flex-1" />
      <div className="flex h-[23px] w-[42px] items-center justify-center bg-[#dcdcdc]"><I.Normal /></div>
      <div className="flex w-[42px] justify-center"><I.PageL /></div>
      <div className="flex w-[42px] justify-center"><I.Break /></div>
      <div className="ml-[5px] h-px w-[8px] bg-[#444]" />
      <div className="relative ml-[6px] flex h-[12px] w-[104px] items-center">
        <div className="h-px w-full bg-[#555]" />
        <div className="absolute left-[44px] h-[12px] w-[5px] bg-[#555]" />
        <div className="absolute left-[52px] h-[6px] w-px bg-[#555]" />
      </div>
      <div className="ml-[4px] w-[8px] text-center text-[13px] leading-none">+</div>
      <div className="ml-[14px] w-[30px] text-[11.5px] text-[#555]">90%</div>
    </div>
  );
}

export default function App() {
  return (
    <div className={"flex h-[850px] w-[1600px] flex-col overflow-hidden bg-[#f0f0f0] " + UI}>
      <TitleBar />
      <TabRow />
      <Ribbon />
      <FormulaBar />
      <div className="mt-[8px] flex min-h-0 flex-1">
        <div className="flex min-w-0 flex-1 flex-col">
          <ColHeaders />
          <Sheet />
        </div>
        <VScroll />
      </div>
      <HScroll />
      <StatusBar />
    </div>
  );
}
